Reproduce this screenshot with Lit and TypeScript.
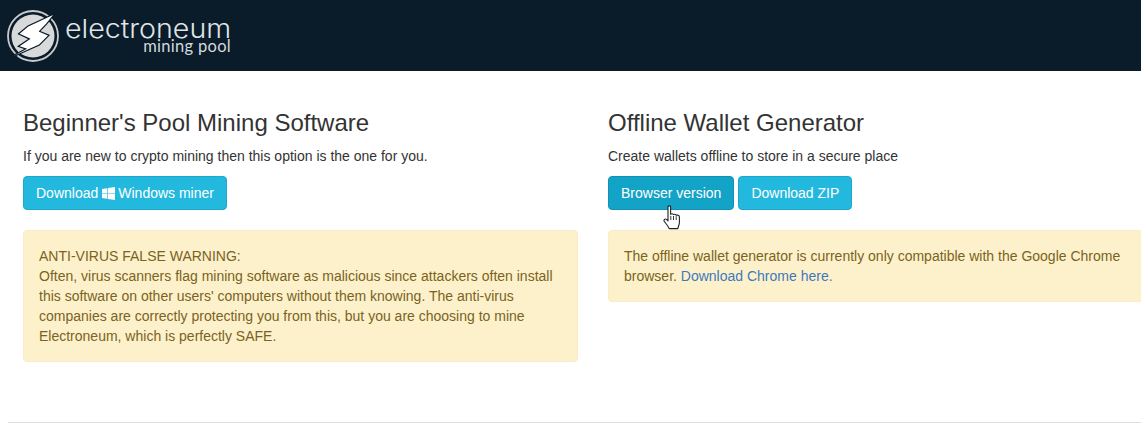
import { LitElement, html, css } from 'lit';
import { customElement } from 'lit/decorators.js';

@customElement('app-root')
export class AppRoot extends LitElement {
  static styles = css`
    :host {
      display: block;
      width: 1141px;
      height: 445px;
      overflow: hidden;
      background: #fff;
      color: #333;
      font-family: 'Liberation Sans', Arial, sans-serif;
      font-size: 14px;
      line-height: 20px;
    }
    .topbar {
      height: 71px;
      background: #0a1b2a;
      display: flex;
      align-items: center;
      padding-left: 7px;
      gap: 7px;
      box-sizing: border-box;
    }
    .mark {
      width: 52px;
      height: 52px;
      flex: none;
    }
    .wordmark {
      display: flex;
      flex-direction: column;
      align-items: flex-end;
      color: #dfe4e6;
      width: 165px;
      margin-top: -2px;
    }
    .word-main {
      font-family: 'Inter', sans-serif;
      font-weight: 300;
      font-size: 26px;
      line-height: 27px;
      white-space: nowrap;
      transform: scaleX(1.1);
      transform-origin: right center;
    }
    .word-sub {
      font-family: 'Lato', sans-serif;
      font-weight: 400;
      font-size: 16.5px;
      line-height: 17px;
      letter-spacing: 0.3px;
      margin-top: -4px;
      color: #d3d9dc;
      white-space: nowrap;
    }
    .page {
      width: 1170px;
      padding-left: 8px;
    }
    .row {
      display: grid;
      grid-template-columns: 585px 585px;
      height: 329px;
    }
    .col {
      padding: 0 15px;
    }
    h3 {
      margin: 39px 0 10px;
      font-size: 24px;
      font-weight: 500;
      line-height: 26px;
    }
    p {
      margin: 0 0 10px;
    }
    .actions {
      position: relative;
      display: flex;
      gap: 4px;
      margin-bottom: 20px;
    }
    .btn {
      display: inline-flex;
      align-items: center;
      height: 34px;
      box-sizing: border-box;
      padding: 0 12px;
      background: #23b8de;
      border: 1px solid #1ca9cc;
      border-radius: 4px;
      color: #fff;
      white-space: nowrap;
    }
    .btn.hover {
      background: #13a3c7;
      border-color: #1092b4;
    }
    .win {
      width: 13px;
      height: 13px;
      margin: 0 3px 0 4px;
    }
    .cursor {
      position: absolute;
      left: 55px;
      top: 29px;
      width: 18px;
      height: 25px;
    }
    .alert {
      padding: 15px;
      background: #fdf1cb;
      border: 1px solid #f9ecc6;
      border-radius: 4px;
      color: #7a6322;
    }
    a {
      color: #3f79bb;
      text-decoration: none;
    }
    hr {
      margin: 22px 0 0;
      border: 0;
      border-top: 1px solid #ddd;
    }
  `;

  render() {
    return html`
      <div class="topbar">
        <svg class="mark" viewBox="0 0 52 52">
          <circle cx="26" cy="26" r="25" fill="none" stroke="#c9cccd" stroke-width="1.8" />
          <circle cx="26" cy="26" r="21.5" fill="#d8d9d9" />
          <path
            d="M46 5 21.3 16.6 12.6 23.8 23.6 28.8 12.6 36.2 20.2 38.8 6.5 46 32 34.4 41 25.5 31.6 21.5 39 13.8Z"
            fill="#fff"
            stroke="#0a1b2a"
            stroke-width="2.4"
            stroke-linejoin="miter"
            paint-order="stroke"
          />
        </svg>
        <div class="wordmark">
          <span class="word-main">electroneum</span>
          <span class="word-sub">mining pool</span>
        </div>
      </div>
      <div class="page">
        <div class="row">
          <div class="col">
            <h3>Beginner's Pool Mining Software</h3>
            <p>If you are new to crypto mining then this option is the one for you.</p>
            <div class="actions">
              <span class="btn"
                >Download
                <svg class="win" viewBox="0 0 14 14">
                  <path
                    fill="#fff"
                    d="M0 2.1 5.7 1.3V6.6H0ZM6.4 1.2 14 0V6.6H6.4ZM0 7.4H5.7V12.7L0 11.9ZM6.4 7.4H14V14L6.4 12.8Z"
                  /></svg
                >Windows miner</span
              >
            </div>
            <div class="alert">
              ANTI-VIRUS FALSE WARNING:<br />
              Often, virus scanners flag mining software as malicious since attackers often install
              this software on other users' computers without them knowing. The anti-virus companies
              are correctly protecting you from this, but you are choosing to mine Electroneum, which
              is perfectly SAFE.
            </div>
          </div>
          <div class="col">
            <h3>Offline Wallet Generator</h3>
            <p>Create wallets offline to store in a secure place</p>
            <div class="actions">
              <span class="btn hover">Browser version</span>
              <span class="btn">Download ZIP</span>
              <svg class="cursor" viewBox="0 0 18 25">
                <path
                  d="M5 1.8C5 .6 7.6 .6 7.6 1.8V9.2C8.6 8.4 10 8.6 10.4 9.6 11.4 8.9 12.8 9.2 13.2 10.3 14.4 9.8 16.4 10.4 16.4 12V17.6C16.4 20 15.2 21.2 14.8 23.6H6.2C5.4 21.4 3.6 19.4 1.4 16.6 .2 15 2.2 13.2 3.6 14.4L5 15.8Z"
                  fill="#fff"
                  stroke="#222"
                  stroke-width="1.1"
                  stroke-linejoin="round"
                />
                <path d="M7.8 11V15M10.5 11V15M13.2 11.2V15" stroke="#222" stroke-width=".9" fill="none" />
              </svg>
            </div>
            <div class="alert">
              The offline wallet generator is currently only compatible with the Google Chrome
              browser. <a href="#">Download Chrome here.</a>
            </div>
          </div>
        </div>
        <hr />
      </div>
    `;
  }
}
